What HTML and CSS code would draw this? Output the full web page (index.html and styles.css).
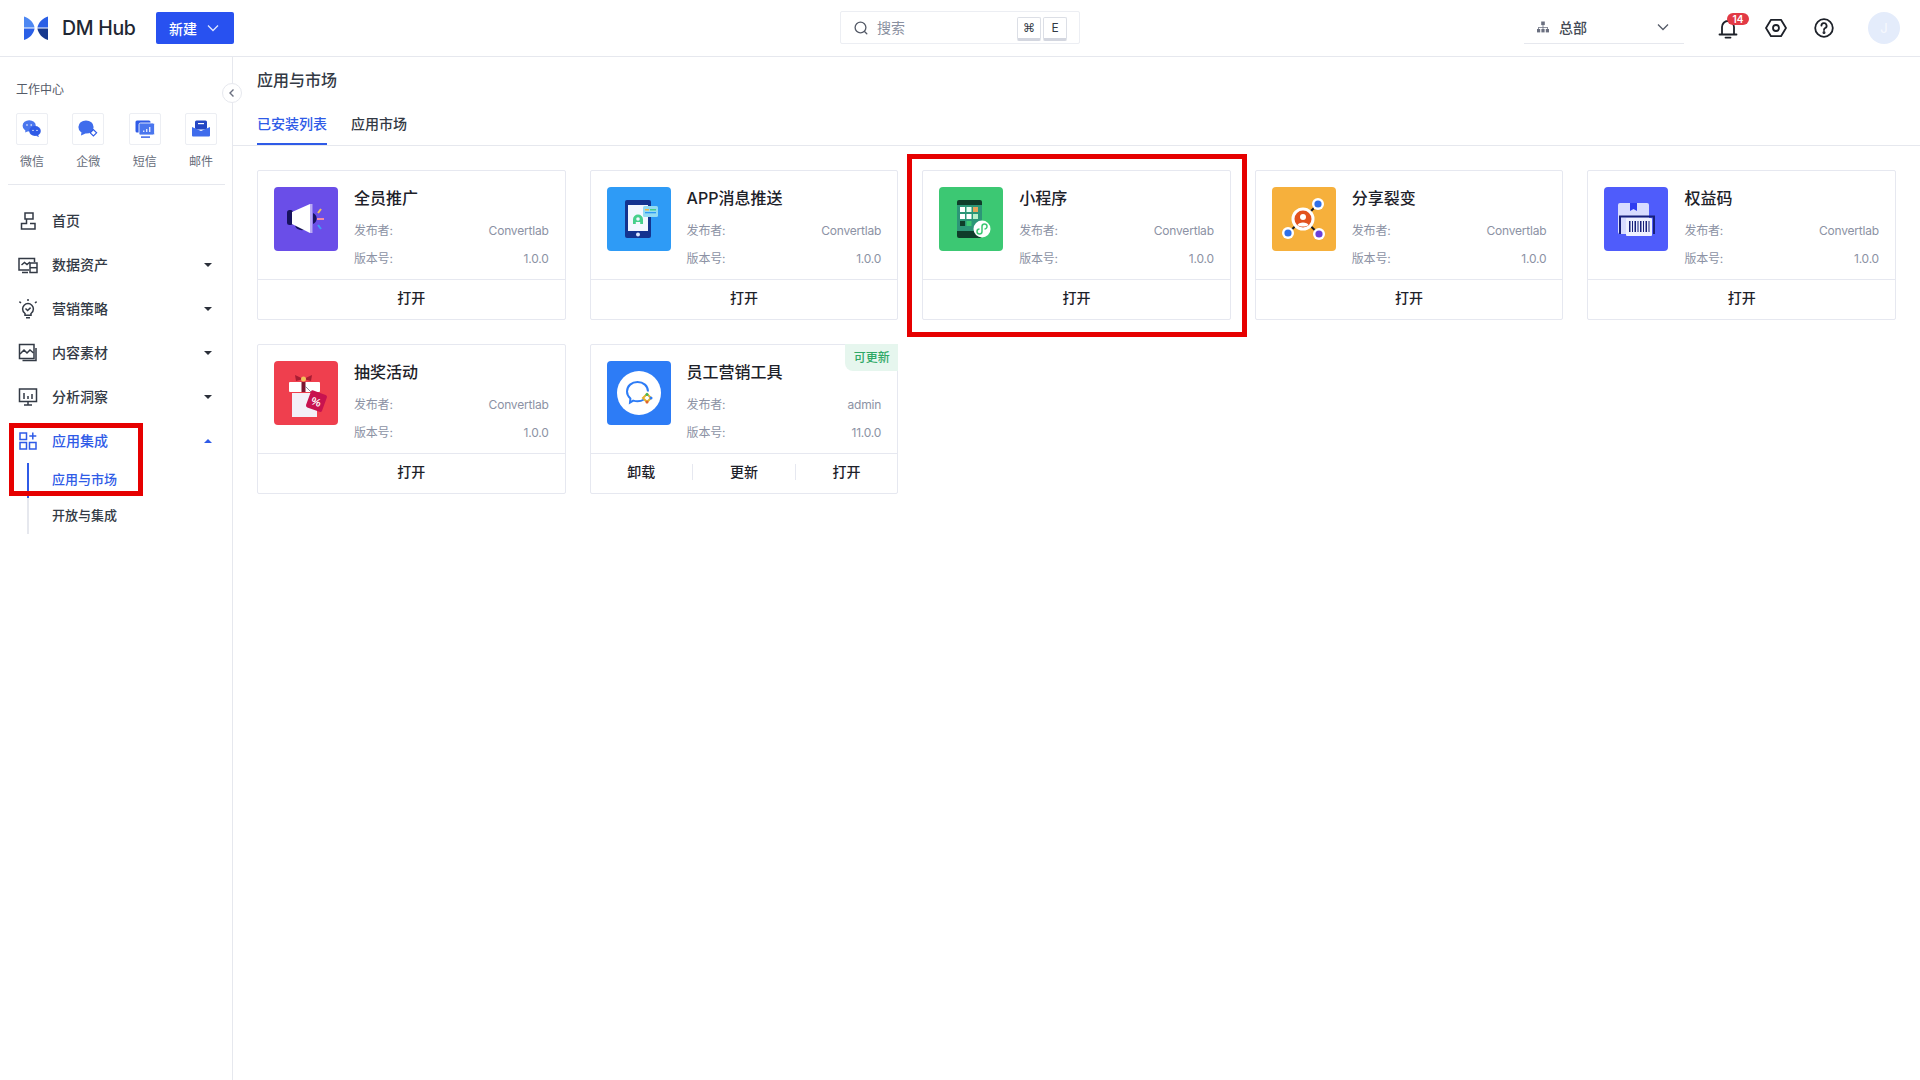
FILE: index.html
```html
<!DOCTYPE html>
<html lang="zh-CN">
<head>
<meta charset="utf-8">
<title>DM Hub</title>
<link rel="stylesheet" href="styles.css">
</head>
<body>
<div class="app">
  <header class="topbar">
    <svg class="logo" viewBox="0 0 24 24" width="24" height="24">
      <path d="M0 0.5V11.6H10.6C9.6 6.6 5.6 2.2 0 0.5Z" fill="#4d87f2"/>
      <path d="M0 12.6V24C5.6 22.4 9.6 18 10.6 12.6Z" fill="#2a5fe6"/>
      <path d="M24 0.5V11.6H13.4C14.4 6.6 18.4 2.2 24 0.5Z" fill="#2a5fe6"/>
      <path d="M24 12.6V24C18.4 22.4 14.4 18 13.4 12.6Z" fill="#17398f"/>
    </svg>
    <span class="brand">DM Hub</span>
    <button class="new-btn"><span>新建</span>
      <svg width="14" height="14" viewBox="0 0 14 14" fill="none" stroke="#dfe6ff" stroke-width="1.3"><path d="M2 4.500 7 9.500 12 4.500"/></svg>
    </button>
    <div class="search">
      <svg width="16" height="16" viewBox="0 0 16 16" fill="none" stroke="#555b68" stroke-width="1.3"><circle cx="7.500" cy="7.500" r="5.400"/><path d="M11.500 11.500 13.800 13.800" stroke-linecap="round"/></svg>
      <span class="search-text">搜索</span>
      <span class="kbd kbd-first">⌘</span>
      <span class="kbd">E</span>
    </div>
    <div class="org">
      <svg width="14" height="14" viewBox="0 0 14 14" fill="#6b7080"><rect x="5.200" y="1.500" width="3.600" height="3.600"/><rect x="1" y="9" width="3.200" height="3.400"/><rect x="5.400" y="9" width="3.200" height="3.400"/><rect x="9.800" y="9" width="3.200" height="3.400"/><path d="M6.600 5h.8v2h4.400v2h-.8V7.800H7.400V9h-.8V7.800H3V9h-.8V7h4.400z"/></svg>
      <span class="org-name">总部</span>
      <svg class="org-arrow" width="14" height="14" viewBox="0 0 14 14" fill="none" stroke="#555b68" stroke-width="1.3"><path d="M2 4.500 7 9.500 12 4.500"/></svg>
    </div>
    <div class="tool tool-bell">
      <svg width="24" height="24" viewBox="0 0 24 24" fill="none" stroke="#1d2129" stroke-width="1.800"><path d="M6 18V11a6 6 0 0 1 12 0v7"/><path d="M3.500 18.500h17" stroke-linecap="round"/><path d="M9.500 21.600h5" stroke-linecap="round"/></svg>
      <span class="badge">14</span>
    </div>
    <div class="tool tool-nut">
      <svg width="24" height="24" viewBox="0 0 24 24" fill="none" stroke="#1d2129" stroke-width="1.800"><path d="M7 3.800h10l5 8.200-5 8.200H7L2 12z" stroke-linejoin="round"/><circle cx="12" cy="12" r="3"/></svg>
    </div>
    <div class="tool tool-help">
      <svg width="24" height="24" viewBox="0 0 24 24" fill="none" stroke="#1d2129" stroke-width="1.800"><circle cx="12" cy="12" r="8.800"/><path d="M9.400 9.600a2.600 2.600 0 1 1 3.800 2.400c-.8.400-1.200 1-1.200 2" stroke-linecap="round"/><circle cx="12" cy="16.600" r=".6" fill="#1d2129"/></svg>
    </div>
    <div class="avatar">J</div>
  </header>

  <div class="layout">
    <aside class="sidebar">
      <div class="side-title">工作中心</div>
      <div class="tiles">
        <div class="tile-col">
          <div class="tile"><svg width="20" height="20" viewBox="0 0 20 20" fill="#2f5be7"><ellipse cx="7.200" cy="6.800" rx="6.600" ry="5.600" fill="#4a76ee"/><path d="M3.500 10.500 3.200 13.500 6.500 12z" fill="#4a76ee"/><ellipse cx="13" cy="12" rx="5.800" ry="5"/><path d="M16 15.800 17 18 13.800 16.800z"/><circle cx="5" cy="6" r=".8" fill="#fff"/><circle cx="9.200" cy="6" r=".8" fill="#fff"/><circle cx="11" cy="11.400" r=".7" fill="#fff"/><circle cx="15" cy="11.400" r=".7" fill="#fff"/></svg></div>
          <span>微信</span>
        </div>
        <div class="tile-col">
          <div class="tile"><svg width="20" height="20" viewBox="0 0 20 20" fill="#2f5be7"><ellipse cx="8" cy="8" rx="7.600" ry="6.600" fill="#3f6cec"/><path d="M3.500 13 3 16.400 7.600 14.600z" fill="#3f6cec"/><path d="M15.400 10.600 18.600 13.800 15.400 17 12.200 13.800z" fill="#fff" stroke="#2f5be7" stroke-width="1.200"/></svg></div>
          <span>企微</span>
        </div>
        <div class="tile-col">
          <div class="tile"><svg width="20" height="20" viewBox="0 0 20 20"><rect x="0.500" y="1.500" width="15" height="12" rx="1.500" fill="#2f5be7"/><rect x="4" y="4" width="15.500" height="12" rx="1.500" fill="#4a76ee" stroke="#fff" stroke-width=".8"/><path d="M8 11.600h1.400V13H8zM11 10h1.400v3H11zM14 8h1.400v5H14z" fill="#dfe6ff"/><rect x="6" y="17.400" width="9" height="1.400" fill="#2f5be7"/></svg></div>
          <span>短信</span>
        </div>
        <div class="tile-col">
          <div class="tile"><svg width="20" height="20" viewBox="0 0 20 20"><rect x="4" y="1.500" width="12" height="9" rx="1.500" fill="#2447c4"/><path d="M7 4h6v1.200H7z" fill="#fff"/><path d="M1 8 10 12l9-4v8.500a1 1 0 0 1-1 1H2a1 1 0 0 1-1-1z" fill="#3f6cec"/></svg></div>
          <span>邮件</span>
        </div>
      </div>
      <div class="side-divider"></div>
      <nav class="nav">
        <div class="nav-row">
          <svg class="nav-icon" width="20" height="20" viewBox="0 0 20 20" fill="none" stroke="#333a45" stroke-width="1.500"><path d="M7 2h8v6H7zM8.500 8v4.500H3.500V18H17v-5.500h-5"/></svg>
          <span class="nav-text">首页</span>
        </div>
        <div class="nav-row">
          <svg class="nav-icon" width="20" height="20" viewBox="0 0 20 20" fill="none" stroke="#333a45" stroke-width="1.500"><path d="M11 15H1V3.500h15.500V7"/><path d="M3.500 10 6.500 7.500 9 9.500 12 7"/><path d="M4 17.500h6"/><rect x="12" y="8" width="7" height="9.500"/><path d="M12 12.700h7"/></svg>
          <span class="nav-text">数据资产</span>
          <i class="caret"></i>
        </div>
        <div class="nav-row">
          <svg class="nav-icon" width="20" height="20" viewBox="0 0 20 20" fill="none" stroke="#333a45" stroke-width="1.500"><path d="M7 14.500C5.500 13.400 4.600 11.800 4.600 10a5.400 5.400 0 0 1 10.800 0c0 1.800-.9 3.400-2.400 4.500v1.700H7z"/><path d="M8 18.800h4M7.500 9.500 9.600 11.500 12.600 8.600M10 0v2M1.400 2.600 3 4M18.600 2.600 17 4"/></svg>
          <span class="nav-text">营销策略</span>
          <i class="caret"></i>
        </div>
        <div class="nav-row">
          <svg class="nav-icon" width="20" height="20" viewBox="0 0 20 20" fill="none" stroke="#333a45" stroke-width="1.500"><rect x="1.500" y="1.500" width="14.500" height="14"/><path d="M18 5v12.500H4.500"/><path d="M2 11 6 7l3 3 3-3 3.500 3"/></svg>
          <span class="nav-text">内容素材</span>
          <i class="caret"></i>
        </div>
        <div class="nav-row">
          <svg class="nav-icon" width="20" height="20" viewBox="0 0 20 20" fill="none" stroke="#333a45" stroke-width="1.500"><rect x="1.500" y="2" width="17" height="12.500"/><path d="M6 18h8M10 14.500V18M6 6v6M10 9v3M14 7v5"/></svg>
          <span class="nav-text">分析洞察</span>
          <i class="caret"></i>
        </div>
        <div class="nav-row nav-row-active">
          <svg class="nav-icon" width="20" height="20" viewBox="0 0 20 20" fill="none" stroke="#2f5be7" stroke-width="1.500"><rect x="2" y="2" width="6.500" height="6.500"/><rect x="2" y="11.500" width="6.500" height="6.500"/><rect x="11.500" y="11.500" width="6.500" height="6.500"/><path d="M14.800 1.500v7M11.300 5h7"/></svg>
          <span class="nav-text">应用集成</span>
          <i class="caret caret-up"></i>
        </div>
        <div class="sub sub-active">应用与市场</div>
        <div class="sub sub-plain">开放与集成</div>
      </nav>
      <button class="collapse" aria-label="收起">
        <svg width="10" height="10" viewBox="0 0 10 10" fill="none" stroke="#6b7080" stroke-width="1.400"><path d="M6.500 1.500 3 5l3.500 3.500"/></svg>
      </button>
      <div class="mark mark-nav"></div>
    </aside>

    <main class="main">
      <h1 class="page-title">应用与市场</h1>
      <div class="tabs">
        <div class="tab tab-active">已安装列表</div>
        <div class="tab">应用市场</div>
      </div>
      <section class="grid">

        <article class="card">
          <div class="card-body">
            <svg class="thumb" viewBox="0 0 64 64"><rect width="64" height="64" rx="4" fill="#6a4ee8"/><rect x="13" y="23" width="6" height="15" rx="2.500" fill="#17125e"/><path d="M21 37.500c0 6 9 7 11 4l-2-2c-1.500 1.300-5 1-6-2z" fill="#17125e"/><path d="M18 25 36 17V46L18 37z" fill="#fff"/><path d="M36 17h2.500V46H36z" fill="#b9a9f5"/><path d="M39 26a6 6 0 0 1 0 11z" fill="#17125e"/><path d="M44 26l3-4" stroke="#f2c15a" stroke-width="2"/><path d="M43 32h7" stroke="#f58ba5" stroke-width="2"/><path d="M44 38l3 4" stroke="#3f9cf5" stroke-width="2"/></svg>
            <div class="info">
              <h2 class="card-title">全员推广</h2>
              <div class="meta meta-first"><span>发布者:</span><span>Convertlab</span></div>
              <div class="meta"><span>版本号:</span><span>1.0.0</span></div>
            </div>
          </div>
          <div class="card-foot"><span class="act">打开</span></div>
        </article>

        <article class="card">
          <div class="card-body">
            <svg class="thumb" viewBox="0 0 64 64"><rect width="64" height="64" rx="4" fill="#2e9bf6"/><rect x="18" y="13" width="26" height="38" rx="2" fill="#14338f"/><rect x="21" y="18" width="20" height="26" fill="#f3f7ff"/><circle cx="31" cy="47.500" r="2" fill="#dfe9ff"/><path d="M26 37v-4.500a5 5 0 0 1 10 0V37h-2.800v-2h-4.400v2z" fill="#46cf8b"/><circle cx="31" cy="32" r="1.800" fill="#f3f7ff"/><rect x="36" y="19" width="15" height="11" rx="1.500" fill="#93dbf2"/><path d="M38 22h4v1.500h-4z" fill="#f2b944"/><path d="M38 25h11v1.300H38z" fill="#2e9bf6"/><path d="M43 22h6v1.500h-6z" fill="#46cf8b"/></svg>
            <div class="info">
              <h2 class="card-title">APP消息推送</h2>
              <div class="meta meta-first"><span>发布者:</span><span>Convertlab</span></div>
              <div class="meta"><span>版本号:</span><span>1.0.0</span></div>
            </div>
          </div>
          <div class="card-foot"><span class="act">打开</span></div>
        </article>

        <article class="card">
          <div class="card-body">
            <svg class="thumb" viewBox="0 0 64 64"><rect width="64" height="64" rx="4" fill="#3cc873"/><rect x="18" y="13" width="25" height="38" rx="2" fill="#0f3d2a"/><rect x="18" y="18" width="25" height="26" fill="#2c9677"/><rect x="21" y="20" width="5" height="5" fill="#fff"/><rect x="27.500" y="20" width="5" height="5" fill="#e6fff0"/><rect x="34" y="20" width="5" height="5" fill="#e8a35a"/><rect x="21" y="27" width="5" height="5" fill="#fff"/><rect x="27.500" y="27" width="5" height="5" fill="#fff"/><rect x="34" y="27" width="5" height="5" fill="#b9f0cb"/><rect x="21" y="34" width="5" height="5" fill="#0f3d2a"/><rect x="27.500" y="34" width="5" height="5" fill="#3cc873"/><circle cx="43" cy="42" r="8.500" fill="#fff"/><path d="M40.500 42a2.500 2.500 0 1 0 2.500 2.500v-5a2.500 2.500 0 1 1 2.500 2.500" fill="none" stroke="#3cc873" stroke-width="1.500"/></svg>
            <div class="info">
              <h2 class="card-title">小程序</h2>
              <div class="meta meta-first"><span>发布者:</span><span>Convertlab</span></div>
              <div class="meta"><span>版本号:</span><span>1.0.0</span></div>
            </div>
          </div>
          <div class="card-foot"><span class="act">打开</span></div>
        </article>

        <article class="card">
          <div class="card-body">
            <svg class="thumb" viewBox="0 0 64 64"><rect width="64" height="64" rx="4" fill="#f6b03c"/><path d="M31 32 46 17M31 32 16 46M31 32 47 47" stroke="#1a1a1a" stroke-width="2"/><circle cx="31" cy="32" r="11.500" fill="#fff"/><circle cx="31" cy="32" r="8.500" fill="#e2521e"/><circle cx="31" cy="30" r="3" fill="#fff"/><path d="M25.500 38c.8-3.500 10.200-3.500 11 0-3 2-8 2-11 0z" fill="#fff"/><circle cx="46" cy="17" r="6" fill="#fff"/><circle cx="46" cy="17" r="3.600" fill="#2f6fe8"/><circle cx="16" cy="46" r="6" fill="#fff"/><circle cx="16" cy="46" r="3.600" fill="#2f6fe8"/><circle cx="47" cy="47" r="6" fill="#fff"/><circle cx="47" cy="47" r="3.600" fill="#6a3fd8"/></svg>
            <div class="info">
              <h2 class="card-title">分享裂变</h2>
              <div class="meta meta-first"><span>发布者:</span><span>Convertlab</span></div>
              <div class="meta"><span>版本号:</span><span>1.0.0</span></div>
            </div>
          </div>
          <div class="card-foot"><span class="act">打开</span></div>
        </article>

        <article class="card">
          <div class="card-body">
            <svg class="thumb" viewBox="0 0 64 64"><rect width="64" height="64" rx="4" fill="#4f5cfb"/><rect x="14" y="16" width="31" height="31" rx="2" fill="#d8dcff"/><path d="M26 16h7v8l-3.500-2-3.500 2z" fill="#2f3df0"/><path d="M16 47V29.500h34V47" fill="none" stroke="#17207a" stroke-width="2"/><rect x="22" y="31" width="26" height="18" rx="1" fill="#eef0ff"/><path d="M25 34h1.500v11H25zM28 34h1v11h-1zM30.500 34H32v11h-1.500zM33.500 34h1v11h-1zM36 34h1.500v11H36zM39 34h1v11h-1zM41.500 34H43v11h-1.500zM44.500 34h1v11h-1z" fill="#17207a"/></svg>
            <div class="info">
              <h2 class="card-title">权益码</h2>
              <div class="meta meta-first"><span>发布者:</span><span>Convertlab</span></div>
              <div class="meta"><span>版本号:</span><span>1.0.0</span></div>
            </div>
          </div>
          <div class="card-foot"><span class="act">打开</span></div>
        </article>

        <article class="card">
          <div class="card-body">
            <svg class="thumb" viewBox="0 0 64 64"><rect width="64" height="64" rx="4" fill="#ef3f4e"/><rect x="15" y="21" width="31" height="10" rx="1" fill="#fff"/><rect x="18" y="32" width="25" height="24" fill="#f3f0f8"/><rect x="27.500" y="21" width="4" height="10" fill="#7d1530"/><path d="M29.500 18 21 14l1 6zM29.500 18 38 14l-1 6z" fill="#a81d33"/><circle cx="29.500" cy="18" r="2.500" fill="#f2c15a"/><path d="M31 25 40 34" stroke="#8a8a98" stroke-width="1"/><g transform="rotate(20 42 40)"><rect x="34" y="31" width="17" height="18" rx="2" fill="#c8124f"/><text x="42.500" y="44.500" text-anchor="middle" class="thumb-pct">%</text></g></svg>
            <div class="info">
              <h2 class="card-title">抽奖活动</h2>
              <div class="meta meta-first"><span>发布者:</span><span>Convertlab</span></div>
              <div class="meta"><span>版本号:</span><span>1.0.0</span></div>
            </div>
          </div>
          <div class="card-foot"><span class="act">打开</span></div>
        </article>

        <article class="card">
          <span class="update-tag">可更新</span>
          <div class="card-body">
            <svg class="thumb" viewBox="0 0 64 64"><rect width="64" height="64" rx="4" fill="#2d7cf6"/><circle cx="32" cy="32" r="22" fill="#fff"/><path d="M37 38.500c-2 1.200-4 1.800-6.500 1.800-1.500 0-3-.3-4.300-.7l-3.200 2 .4-4c-2.200-2-3.400-4.400-3.400-7 0-5.800 4.800-9.600 10.500-9.600 5.800 0 10.500 3.800 10.500 9.600" fill="none" stroke="#2d7cf6" stroke-width="2"/><path d="M40 33 44 37 40 41 36 37z" fill="none" stroke="#e2b12e" stroke-width="2"/><circle cx="40" cy="33.500" r="1.500" fill="#3fb85f"/><circle cx="44" cy="37" r="1.500" fill="#2d7cf6"/><circle cx="40" cy="41" r="1.500" fill="#e2622e"/></svg>
            <div class="info">
              <h2 class="card-title">员工营销工具</h2>
              <div class="meta meta-first"><span>发布者:</span><span>admin</span></div>
              <div class="meta"><span>版本号:</span><span>11.0.0</span></div>
            </div>
          </div>
          <div class="card-foot">
            <span class="act">卸载</span>
            <span class="act">更新</span>
            <span class="act">打开</span>
          </div>
        </article>

      </section>
    </main>
  </div>
  <div class="mark mark-card"></div>
</div>
</body>
</html>
```
FILE: styles.css
```css
* { box-sizing: border-box; }
html, body { margin: 0; height: 100%; }
body {
  font-family: Inter, "Noto Sans CJK SC", "Liberation Sans", sans-serif;
  color: #1d2129;
  background: #fff;
}
.app { position: relative; width: 1920px; height: 1080px; overflow: hidden; display: flex; flex-direction: column; }

/* top bar */
.topbar {
  height: 57px;
  flex: none;
  display: flex;
  align-items: center;
  padding: 0 20px 1px 24px;
  border-bottom: 1px solid #e6e8ee;
}
.logo { flex: none; }
.brand { margin-left: 14px; width: 73px; font-size: 19.5px; font-weight: 500; letter-spacing: -0.3px; color: #1f2733; white-space: nowrap; }
.new-btn {
  margin-left: 21px;
  width: 78px;
  height: 32px;
  border: 0;
  border-radius: 2px;
  background: #2851f0;
  color: #fff;
  font: 500 14px Inter, "Noto Sans CJK SC", sans-serif;
  display: flex;
  align-items: center;
  justify-content: space-between;
  padding: 0 14px 0 13px;
}
.search {
  margin-left: 606px;
  width: 240px;
  height: 33px;
  border: 1px solid #eceef3;
  border-radius: 2px;
  display: flex;
  align-items: center;
  padding: 0 12px;
}
.search-text { margin-left: 8px; padding-bottom: 2px; font-size: 14px; color: #8a90a0; margin-right: auto; }
.kbd {
  width: 24px;
  height: 24px;
  margin-top: 3px;
  border: 1px solid #dcdfe6;
  border-bottom: 3px solid #d3d6df;
  border-radius: 2px;
  font-size: 12px;
  line-height: 20px;
  text-align: center;
  color: #333a45;
  background: #fff;
}
.kbd-first { margin-right: 2px; font-family: "DejaVu Sans", sans-serif; }
.org {
  margin-left: 444px;
  width: 160px;
  height: 33px;
  border-bottom: 1px solid #e6e8ee;
  display: flex;
  align-items: center;
  padding: 0 14px 0 12px;
}
.org-name { margin-left: 9px; font-size: 14px; font-weight: 500; color: #444a56; margin-right: auto; }
.tool { position: relative; width: 24px; height: 24px; flex: none; }
.tool svg { display: block; }
.tool-bell { margin-left: 32px; }
.tool-nut { margin-left: 24px; }
.tool-help { margin-left: 24px; }
.badge {
  position: absolute;
  left: 11px;
  top: -3px;
  width: 22px;
  height: 12px;
  border-radius: 6px;
  background: #e23a45;
  color: #fff;
  font-size: 10px;
  font-weight: 600;
  line-height: 12px;
  text-align: center;
}
.avatar {
  margin-left: 32px;
  width: 32px;
  height: 32px;
  border-radius: 50%;
  background: #e4ecfb;
  color: #f7f9fe;
  font-size: 13px;
  line-height: 32px;
  text-align: center;
}

/* layout */
.layout { flex: 1; display: flex; min-height: 0; }
.sidebar {
  position: relative;
  width: 233px;
  flex: none;
  border-right: 1px solid #e6e8ee;
  padding-top: 24px;
}
.side-title { padding-left: 16px; font-size: 12px; line-height: 18px; color: #555b68; }
.tiles { display: flex; justify-content: space-between; padding: 0 15px 0 16px; margin-top: 14px; }
.tile-col { width: 32px; display: flex; flex-direction: column; align-items: center; gap: 7px; font-size: 12px; line-height: 20px; color: #666c7a; }
.tile-col span { white-space: nowrap; }
.tile { width: 32px; height: 32px; border: 1px solid #eceef3; border-radius: 2px; display: flex; align-items: center; justify-content: center; }
.side-divider { height: 1px; margin: 12px 7px 0 8px; background: #e6e8ee; }
.nav { margin-top: 14px; }
.nav-row { height: 44px; display: flex; align-items: center; padding-left: 18px; font-size: 14px; font-weight: 500; color: #333a45; }
.nav-icon { flex: none; }
.nav-text { margin-left: 14px; padding-bottom: 2px; }
.caret { margin-left: auto; margin-right: 20px; width: 0; height: 0; border: 4px solid transparent; border-top: 4px solid #2b303a; border-bottom: 0; }
.caret-up { border-top: 0; border-bottom: 4px solid #2f5be7; }
.nav-row-active { color: #2f5be7; }
.sub { margin-left: 27px; padding-left: 23px; font-size: 13px; font-weight: 500; color: #333a45; }
.sub-active { height: 35px; line-height: 33px; color: #2f5be7; border-left: 2px solid #2f5be7; }
.sub-plain { height: 36px; line-height: 34px; border-left: 2px solid #e6e8ee; }
.collapse {
  position: absolute;
  right: -10px;
  top: 26px;
  width: 20px;
  height: 20px;
  padding: 0;
  border: 1px solid #e6e8ee;
  border-radius: 50%;
  background: #fff;
  display: flex;
  align-items: center;
  justify-content: center;
}

/* main */
.main { flex: 1; min-width: 0; padding-top: 12px; }
.page-title { margin: 0; padding-left: 24px; font-size: 16px; font-weight: 500; line-height: 22px; color: #333a45; }
.tabs { margin-top: 12px; height: 43px; display: flex; gap: 24px; padding-left: 24px; border-bottom: 1px solid #e6e8ee; }
.tab { height: 42px; padding-top: 10px; font-size: 14px; line-height: 22px; font-weight: 500; color: #333a45; }
.tab-active { color: #2f5be7; border-bottom: 2px solid #2f5be7; }

.grid { display: grid; grid-template-columns: repeat(5, 1fr); gap: 24px; padding: 24px 24px 0; }
.card { position: relative; height: 150px; border: 1px solid #e6e8f0; border-radius: 2px; background: #fff; display: flex; flex-direction: column; }
.card-body { height: 108px; display: flex; gap: 16px; padding: 16px 16px 0; }
.thumb { width: 64px; height: 64px; flex: none; display: block; }
.thumb-pct { font: 700 11px "Liberation Sans", sans-serif; fill: #fff; }
.info { flex: 1; min-width: 0; }
.card-title { margin: 0; font-size: 16px; font-weight: 500; line-height: 22px; color: #1d2129; }
.meta { display: flex; justify-content: space-between; margin-top: 8px; font-size: 12px; line-height: 20px; color: #8c92a4; letter-spacing: -0.2px; }
.meta-first { margin-top: 12px; }
.card-foot { flex: 1; border-top: 1px solid #e6e8f0; padding-bottom: 3px; display: flex; align-items: center; }
.act { flex: 1; text-align: center; font-size: 14px; font-weight: 500; line-height: 16px; color: #1d2129; border-left: 1px solid #e6e8f0; }
.act:first-child { border-left: 0; }
.update-tag {
  position: absolute;
  right: -1px;
  top: -1px;
  width: 53px;
  height: 27px;
  border-bottom-left-radius: 8px;
  background: #e6f6ee;
  color: #2fa866;
  font-size: 12px;
  font-weight: 500;
  line-height: 27px;
  text-align: center;
}

/* red annotation boxes */
.mark { position: absolute; border: 5px solid #e60000; pointer-events: none; }
.mark-nav { left: 9px; top: 366px; width: 134px; height: 73px; }
.mark-card { left: 907px; top: 154px; width: 340px; height: 183px; }
```
